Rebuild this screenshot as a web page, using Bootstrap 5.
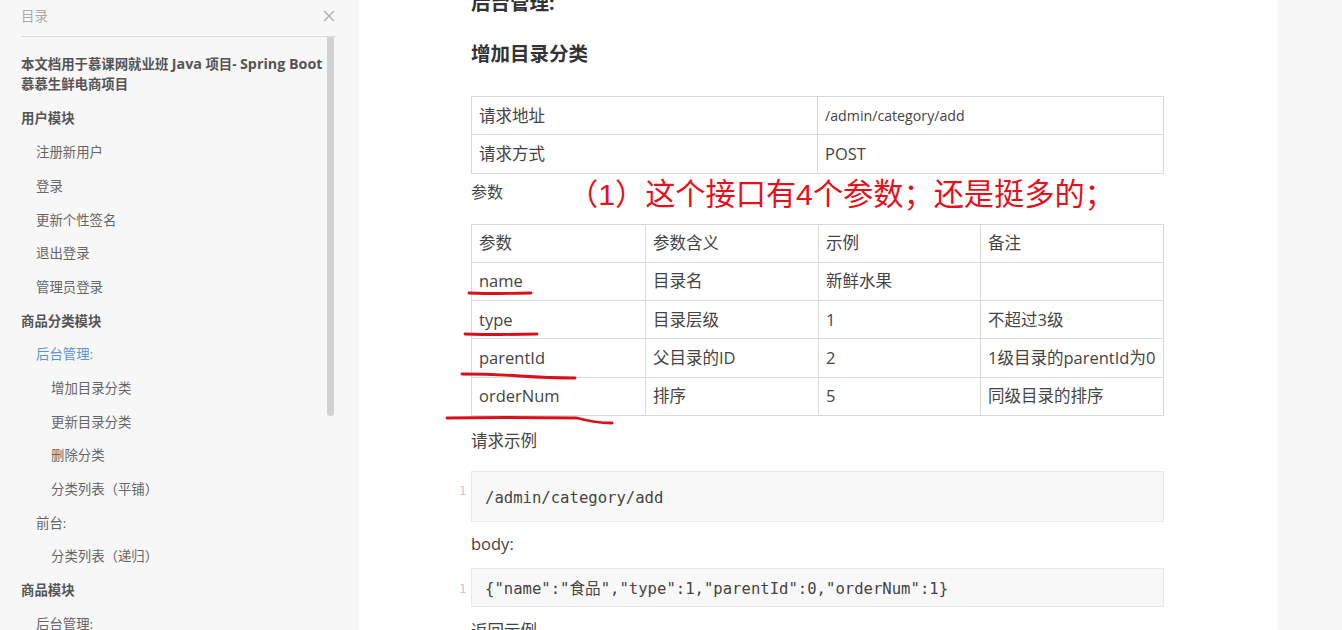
<!DOCTYPE html>
<html lang="zh">
<head>
<meta charset="utf-8">
<title>目录</title>
<link href="https://cdn.jsdelivr.net/npm/bootstrap@5.3.0/dist/css/bootstrap.min.css" rel="stylesheet">
<style>
html,body{height:630px;overflow:hidden}
body{background:#f7f7f7;font-family:"Open Sans","Noto Sans CJK SC",sans-serif;color:#444}
.shell{height:630px;width:1342px}
.toc{width:359px;flex:none;padding:0 23px 0 21px;overflow:hidden;background:#f7f7f7;position:relative}
.toc-head{height:37px;border-bottom:1px solid #ddd;color:#aaa;font-size:13.4px;padding-top:6px}
.toc-close{width:12px;height:12px;margin-right:1px;margin-top:4px}
.toc-list{list-style:none;margin:0;padding:17.3px 0 0 0;width:308px;font-size:13.4px;line-height:20px;color:#666}
.toc-list li{margin-bottom:13.7px;white-space:nowrap}
.toc-list .lv1{font-weight:700;color:#555;white-space:normal}
.toc-list .lv2{padding-left:15px}
.toc-list .lv3{padding-left:30px}
.toc-list .on{color:#5b95d0}
.toc-list .first{margin-bottom:14.2px}
.toc-latin{font-size:14.3px}
.toc-bar{position:absolute;left:327px;top:37px;width:7px;height:379px;background:#d2d2d2;border-radius:0 0 3px 3px}
.doc{width:918px;flex:none;background:#fff;padding:0 113px 0 112px;position:relative;overflow:hidden;font-size:16.5px}
.doc-h3{font-size:19.5px;font-weight:700;color:#333;line-height:28px;margin:-11px 0 23px}
.doc-h4{font-size:19.5px;font-weight:700;color:#333;line-height:28px;margin:0 0 28px}
.doc-table{width:692px;table-layout:fixed;border-collapse:collapse;margin:0;color:#444}
.doc-table td{border:1px solid #d9d9d9;padding:0 7px;height:38.25px;vertical-align:middle;line-height:24px;white-space:nowrap}
.doc-table .url{font-size:14.2px}
.doc-p{margin:0;line-height:24px;color:#444}
.p-a{margin:6px 0 20px;font-size:16px}
.p-b{margin:13px 0 18px}
.p-c{margin:10px 0 12px}
.p-d{margin:12px 0 0}
.code-box{background:#f8f8f8;border:1px solid #e9e9e9;font-family:"DejaVu Sans Mono","Noto Sans CJK SC",monospace;font-size:15.6px;color:#444;padding:4px 13px 0;display:flex;align-items:center;position:relative}
.code-1{height:51px}
.code-2{height:39px}
.gutter{position:absolute;left:-13px;font-size:12px;color:#c8c8c8;line-height:20px}
.code-1 .gutter{top:9px}
.code-2 .gutter{top:10px}
.note{position:absolute;left:209px;top:175px;font-size:30.2px;line-height:40px;color:#e5101b;white-space:nowrap;font-family:"Liberation Sans","Noto Sans CJK SC",sans-serif}
.ink{position:absolute;left:0;top:0;pointer-events:none}
.rest{flex:1;background:#f7f7f7}
</style>
</head>
<body>
<div class="shell d-flex">
  <aside class="toc">
    <div class="toc-head d-flex justify-content-between align-items-start">
      <span>目录</span>
      <svg class="toc-close" viewBox="0 0 12 12"><path d="M1 1L11 11M11 1L1 11" stroke="#aaa" stroke-width="1.2" fill="none"/></svg>
    </div>
    <ul class="toc-list">
      <li class="lv1 first">本文档用于慕课网就业班 <span class="toc-latin">Java</span> 项目- <span class="toc-latin">Spring Boot</span> 慕慕生鲜电商项目</li>
      <li class="lv1">用户模块</li>
      <li class="lv2">注册新用户</li>
      <li class="lv2">登录</li>
      <li class="lv2">更新个性签名</li>
      <li class="lv2">退出登录</li>
      <li class="lv2">管理员登录</li>
      <li class="lv1">商品分类模块</li>
      <li class="lv2 on">后台管理:</li>
      <li class="lv3">增加目录分类</li>
      <li class="lv3">更新目录分类</li>
      <li class="lv3">删除分类</li>
      <li class="lv3">分类列表（平铺）</li>
      <li class="lv2">前台:</li>
      <li class="lv3">分类列表（递归）</li>
      <li class="lv1">商品模块</li>
      <li class="lv2">后台管理:</li>
    </ul>
    <div class="toc-bar"></div>
  </aside>
  <main class="doc">
    <div class="doc-h3">后台管理:</div>
    <div class="doc-h4">增加目录分类</div>
    <table class="doc-table">
      <colgroup><col style="width:346px"><col style="width:346px"></colgroup>
      <tr><td>请求地址</td><td class="url">/admin/category/add</td></tr>
      <tr><td>请求方式</td><td>POST</td></tr>
    </table>
    <p class="doc-p p-a">参数</p>
    <table class="doc-table">
      <colgroup><col style="width:174px"><col style="width:173px"><col style="width:162px"><col style="width:183px"></colgroup>
      <tr><td>参数</td><td>参数含义</td><td>示例</td><td>备注</td></tr>
      <tr><td>name</td><td>目录名</td><td>新鲜水果</td><td></td></tr>
      <tr><td>type</td><td>目录层级</td><td>1</td><td>不超过3级</td></tr>
      <tr><td>parentId</td><td>父目录的ID</td><td>2</td><td>1级目录的parentId为0</td></tr>
      <tr><td>orderNum</td><td>排序</td><td>5</td><td>同级目录的排序</td></tr>
    </table>
    <p class="doc-p p-b">请求示例</p>
    <div class="code-box code-1"><span class="gutter">1</span>/admin/category/add</div>
    <p class="doc-p p-c">body:</p>
    <div class="code-box code-2"><span class="gutter">1</span>{"name":"食品","type":1,"parentId":0,"orderNum":1}</div>
    <p class="doc-p p-d">返回示例</p>
    <div class="note">（1）这个接口有4个参数；还是挺多的；</div>
    <svg class="ink" width="918" height="630" viewBox="359 0 918 630" fill="none" stroke="#d8101c" stroke-linecap="round" stroke-width="2.8">
      <path d="M469 293Q500 294 531 293"/>
      <path d="M465 334Q500 335 537 334"/>
      <path d="M462 374Q490 374 520 376Q550 378 575 378"/>
      <path d="M447 418Q500 417 577 418Q595 423 612 423"/>
    </svg>
  </main>
  <div class="rest"></div>
</div>
<script src="https://cdn.jsdelivr.net/npm/bootstrap@5.3.0/dist/js/bootstrap.bundle.min.js"></script>
</body>
</html>
